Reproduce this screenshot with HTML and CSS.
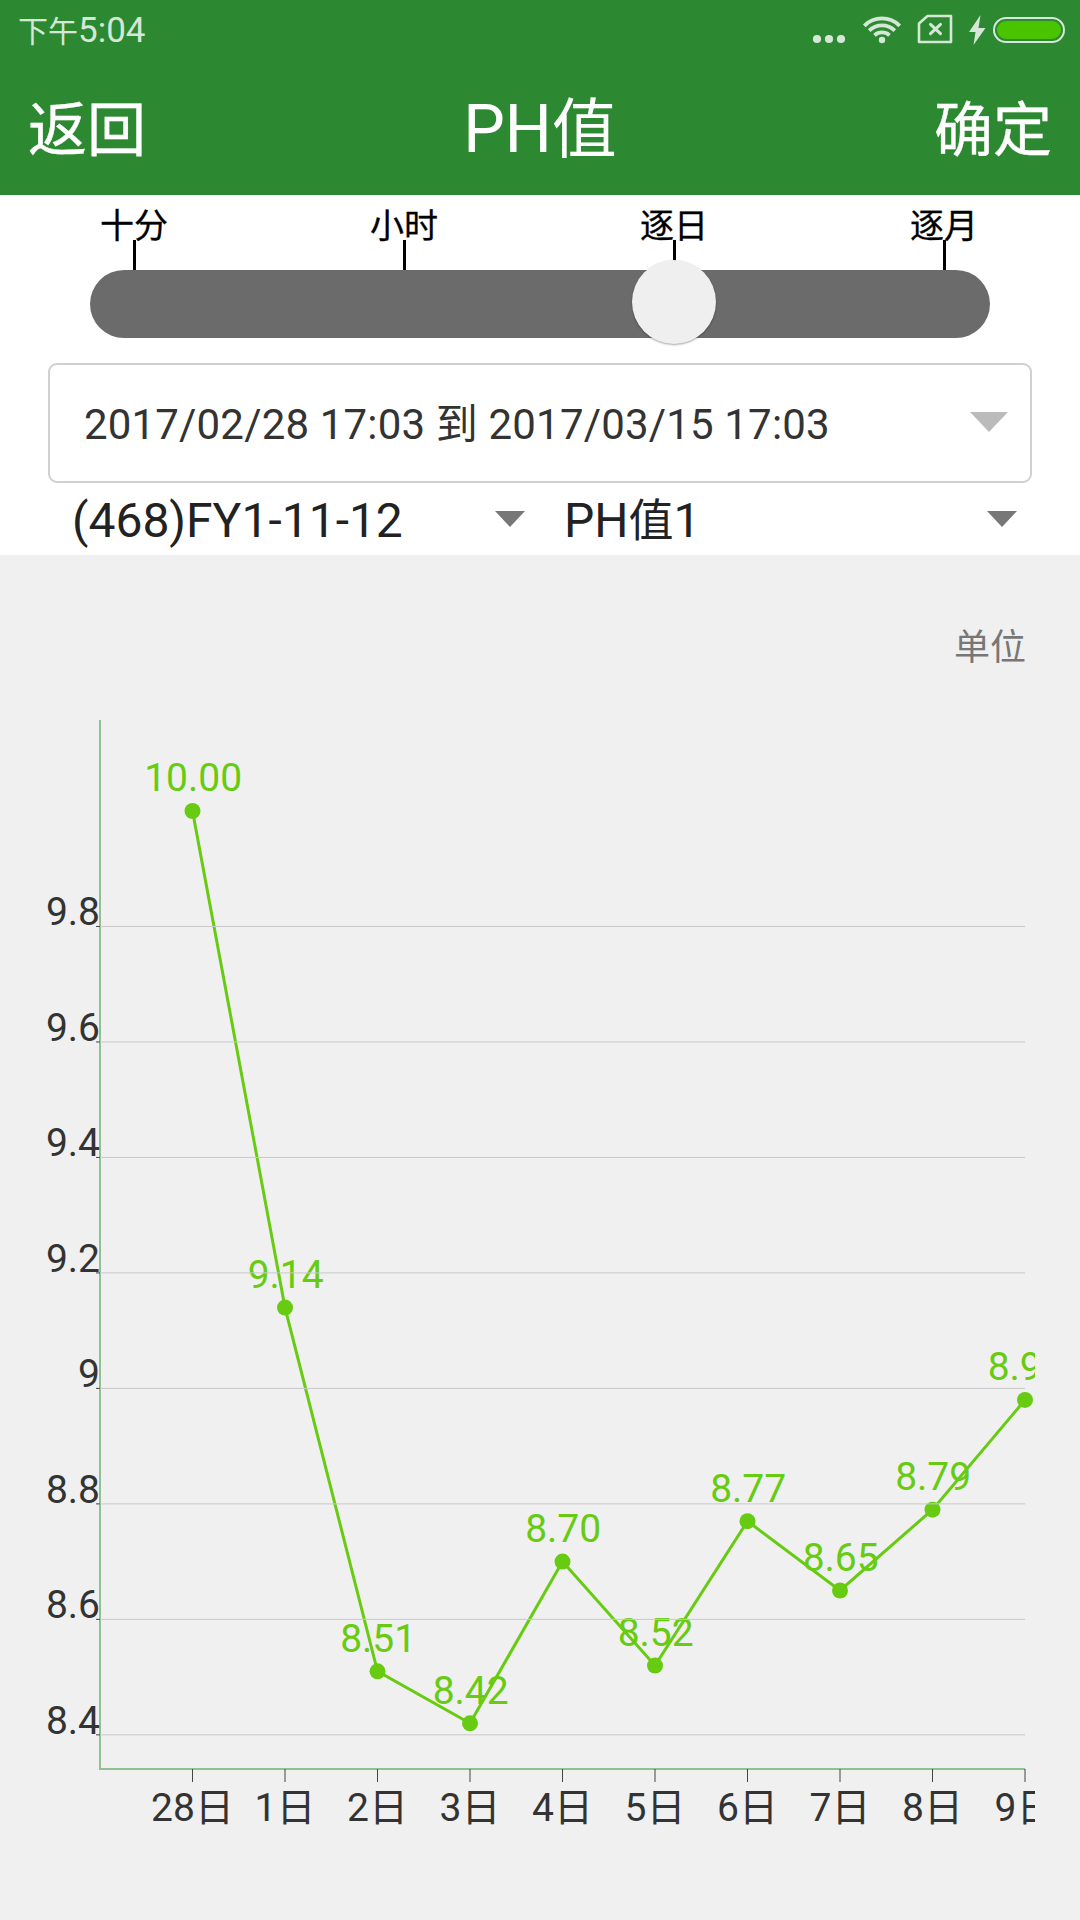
FILE: index.html
```
<!DOCTYPE html>
<html lang="zh-CN">
<head>
  <meta charset="UTF-8">
  <meta name="viewport" content="width=device-width, initial-scale=1.0">
  <link rel="stylesheet" href="styles.css">
  <title>PH值</title>
</head>
<body>
  <header>
    <div class="status-bar">
      <div class="time"><span>下午</span>5:04</div>
      <svg class="status-icons" width="256" height="60" viewBox="0 0 256 60">
        <g class="solid">
          <circle cx="7" cy="39" r="4.1"/>
          <circle cx="19" cy="39" r="4.1"/>
          <circle cx="31" cy="39" r="4.1"/>
          <circle cx="72" cy="40" r="3.2"/>
          <path d="M170.500 15L159 32H165.500L163.500 45L175.500 28H168.500Z"/>
        </g>
        <g class="stroke">
          <path d="M54.300 25.800A25 25 0 0 1 89.700 25.800" stroke-width="3.800"/>
          <path d="M59.200 30.600A18.100 18.100 0 0 1 84.800 30.600" stroke-width="3.800"/>
          <path d="M64.500 35.300A11.300 11.300 0 0 1 79.500 35.300" stroke-width="3.800"/>
          <path d="M117.500 16H141V42H109V23.500Z" stroke-width="2.600" stroke-linejoin="round"/>
          <path d="M120.500 24.300L130.500 33.700M130.500 24.300L120.500 33.700" stroke-width="3" stroke-linecap="round"/>
          <rect x="184" y="18" width="70" height="24" rx="12" stroke-width="2"/>
        </g>
        <rect class="charge" x="187" y="21" width="64" height="18" rx="9"/>
      </svg>
    </div>
    <nav>
      <a class="action">返回</a>
      <h1>PH<span>值</span></h1>
      <a class="action">确定</a>
    </nav>
  </header>

  <section class="filters">
    <div class="scale">
      <div>十分</div>
      <div>小时</div>
      <div>逐日</div>
      <div>逐月</div>
    </div>
    <div class="track"><div class="thumb"></div></div>
    <div class="range">
      <div class="dates">2017/02/28 17:03 到 2017/03/15 17:03</div>
      <i class="arrow"></i>
    </div>
    <div class="selects">
      <div class="select"><div>(468)FY1-11-12</div><i class="arrow"></i></div>
      <div class="select"><div>PH<span>值</span>1</div><i class="arrow"></i></div>
    </div>
  </section>

  <section class="chart">
    <div class="unit">单位</div>
    <svg id="plot" width="1035" height="1200" viewBox="0 700 1035 1200"></svg>
  </section>

  <script>
    document.addEventListener("DOMContentLoaded", function() {
      const data = [
        ["28", 10.00], ["1", 9.14], ["2", 8.51], ["3", 8.42], ["4", 8.70],
        ["5", 8.52], ["6", 8.77], ["7", 8.65], ["8", 8.79], ["9", 8.98]
      ];
      const levels = [9.8, 9.6, 9.4, 9.2, 9, 8.8, 8.6, 8.4];
      const left = 100, right = 1025, top = 720, bottom = 1769, step = 92.5;

      const x = i => left + step * (i + 1);
      const y = v => 811 + (10 - v) * 577.4;

      let svg = "";
      svg += `<path class="axis" d="M${left} ${top}V${bottom}H${right}"/>`;
      svg += `<polyline class="series" points="${data.map((d, i) => x(i) + "," + y(d[1])).join(" ")}"/>`;

      data.forEach((d, i) => {
        svg += `<circle class="dot" cx="${x(i)}" cy="${y(d[1])}" r="8"/>`;
        svg += `<text class="value" x="${x(i) + 0.7}" y="${y(d[1]) - 19.7}">${d[1].toFixed(2)}</text>`;
        svg += `<path class="tick" d="M${x(i)} ${bottom}V1782"/>`;
        svg += `<text class="day" x="${x(i)}" y="1821">${d[0]}<tspan>日</tspan></text>`;
      });

      // grid goes over the line
      levels.forEach(v => {
        svg += `<path class="grid" d="M${left} ${y(v)}H${right}"/>`;
        svg += `<path class="tick" d="M96 ${y(v)}H${left}"/>`;
        svg += `<text class="level" x="${left}" y="${y(v) - 1.3}">${v}</text>`;
      });

      document.getElementById("plot").innerHTML = svg;
    });
  </script>
</body>
</html>
```
FILE: styles.css
```
* {
  box-sizing: border-box;
}

body {
  margin: 0;
  width: 1080px;
  height: 1920px;
  overflow: hidden;
  background: #f0f0f0;
  font-family: Roboto, "Noto Sans CJK SC", sans-serif;
}

header {
  height: 195px;
  background: #2d8931;
  color: #fff;
}

.status-bar {
  display: flex;
  justify-content: space-between;
  height: 60px;
  padding: 0 14px 0 18px;
}

.time {
  color: #d5e7d6;
  font-size: 35px;
  line-height: 62px;
}

.time span {
  font-size: 30px;
}

.status-icons .solid {
  fill: #d5e7d6;
}

.status-icons .stroke {
  fill: none;
  stroke: #d5e7d6;
}

.status-icons .charge {
  fill: #4ac400;
}

nav {
  display: flex;
  justify-content: space-between;
  align-items: center;
  height: 135px;
  padding: 4px 28px 0 28px;
}

h1 {
  margin: 0;
  font-size: 66px;
  font-weight: 400;
  line-height: 131px;
}

h1 span {
  font-size: 65px;
}

.action {
  padding-top: 2px;
  font-size: 59px;
  line-height: 131px;
  -webkit-text-stroke: 0.4px #fff;
}

.filters {
  height: 360px;
  background: #fff;
}

.scale {
  display: grid;
  grid-template-columns: repeat(4, 270px);
  height: 75px;
  margin-left: -1px;
  color: #000;
  font-size: 34px;
  text-align: center;
  -webkit-text-stroke: 0.3px #000;
}

.scale div {
  height: 75px;
  line-height: 62px;
  background: linear-gradient(#000, #000) center bottom / 3px 30px no-repeat;
}

.track {
  width: 900px;
  height: 68px;
  margin: 0 auto;
  padding-left: 542px;
  border-radius: 34px;
  background: #6b6b6b;
}

.thumb {
  position: relative;
  top: -10px;
  width: 84px;
  height: 84px;
  border-radius: 50%;
  background: #efefef;
  box-shadow: 0 1px 2px rgba(0, 0, 0, 0.35);
}

.range {
  display: flex;
  justify-content: space-between;
  align-items: center;
  width: 984px;
  height: 120px;
  margin: 25px auto 0;
  padding: 0 22px 0 34px;
  border: 2px solid #d0d0d0;
  border-radius: 9px;
  color: #333;
}

.dates {
  padding-bottom: 5px;
  font-size: 42px;
  letter-spacing: 0.17px;
}

.arrow {
  width: 30px;
  height: 16px;
  background: #777;
  clip-path: polygon(0 0, 100% 0, 50% 100%);
}

.range .arrow {
  width: 38px;
  height: 20px;
  background: #bbb;
  margin-bottom: 2px;
}

.selects {
  display: grid;
  grid-template-columns: 453px 453px;
  column-gap: 39px;
  padding-left: 72px;
}

.select {
  display: flex;
  justify-content: space-between;
  align-items: center;
  height: 72px;
  font-size: 48px;
  color: #222;
}

.select div {
  padding-top: 4px;
  line-height: 68px;
}

.select span {
  font-size: 45px;
}

.chart {
  height: 1365px;
}

.unit {
  height: 145px;
  padding: 63px 54px 0 0;
  color: #777;
  font-size: 36px;
  line-height: 60px;
  text-align: right;
}

#plot {
  display: block;
}

#plot text {
  font-size: 39px;
}

#plot .axis {
  fill: none;
  stroke: #90c193;
  stroke-width: 2;
}

#plot .grid {
  stroke: #c8c8c8;
  stroke-width: 1;
}

#plot .tick {
  stroke: #444;
  stroke-width: 1;
}

#plot .series {
  fill: none;
  stroke: #67cb12;
  stroke-width: 3;
}

#plot .dot {
  fill: #67cb12;
}

#plot .value {
  fill: #67cb12;
  text-anchor: middle;
}

#plot .day {
  fill: #333;
  text-anchor: middle;
}

#plot .level {
  fill: #333;
  text-anchor: end;
}
```
